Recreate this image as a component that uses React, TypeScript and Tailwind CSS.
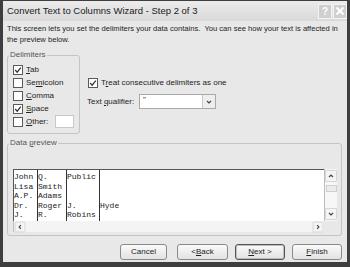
import React from 'react';

const rows = [
  ['John', 'Q.', 'Public', ''],
  ['Lisa', 'Smith', '', ''],
  ['A.P.', 'Adams', '', ''],
  ['Dr.', 'Roger', 'J.', 'Hyde'],
  ['J.', 'R.', 'Robins', ''],
];

const cols = ['w-[24px] border-r', 'w-[29px] border-r', 'w-[33px] border-r', 'flex-1'];

function Check({ checked }: { checked?: boolean }) {
  return (
    <span className="w-[10px] h-[10px] border border-[#5a5a5a] bg-white flex items-center justify-center shrink-0">
      {checked && (
        <svg width="8" height="8" viewBox="0 0 8 8">
          <path d="M1.2 4 L3.2 6.2 L6.8 1.6" stroke="#333" strokeWidth="1.2" fill="none" />
        </svg>
      )}
    </span>
  );
}

function Btn({ w, children, def }: { w: string; children: React.ReactNode; def?: boolean }) {
  return (
    <div
      className={`${w} h-[16px] rounded-[3px] flex items-center justify-center bg-gradient-to-b from-[#fafafa] to-[#e2e2e2] border ${
        def ? 'border-[#555] shadow-[inset_0_0_0_1px_#bdbdbd]' : 'border-[#8a8a8a]'
      } text-[8px] text-[#222]`}
    >
      {children}
    </div>
  );
}

function Arrow({ dir }: { dir: 'up' | 'down' | 'left' | 'right' }) {
  const d = {
    up: 'M2 5 L4 3 L6 5',
    down: 'M2 3 L4 5 L6 3',
    left: 'M5 2 L3 4 L5 6',
    right: 'M3 2 L5 4 L3 6',
  }[dir];
  return (
    <div className="w-[12px] h-[12px] flex items-center justify-center bg-[#f4f4f4] border border-[#d6d6d6] rounded-[1px]">
      <svg width="8" height="8" viewBox="0 0 8 8">
        <path d={d} stroke="#444" strokeWidth="1.2" fill="none" />
      </svg>
    </div>
  );
}

export default function App() {
  return (
    <div
      className="w-[350px] h-[267px] bg-[#3e3e3e] pt-[1px] px-[3px] pb-[5px] flex flex-col"
      style={{ fontFamily: '"Liberation Sans", Arial, sans-serif' }}
    >
      {/* Title bar */}
      <div className="h-[20px] bg-gradient-to-b from-[#ececec] to-[#d9d9d9] flex items-center pl-[4px] pr-[0px]">
        <span className="text-[9.5px] text-[#1a1a1a] flex-1">
          Convert Text to Columns Wizard - Step 2 of 3
        </span>
        <div className="flex gap-[1px]">
          <div className="w-[14px] h-[15px] bg-[#cfcfcf] border border-[#f4f4f4] flex items-center justify-center text-[10px] text-white font-bold">
            ?
          </div>
          <div className="w-[14px] h-[15px] bg-[#cfcfcf] border border-[#f4f4f4] flex items-center justify-center">
            <svg width="10" height="10" viewBox="0 0 10 10">
              <path d="M1.5 1.5 L8.5 8.5 M8.5 1.5 L1.5 8.5" stroke="#fff" strokeWidth="2" />
            </svg>
          </div>
        </div>
      </div>

      {/* Body */}
      <div className="flex-1 bg-[#e8e8e8] px-[4px] pt-[2px] flex flex-col text-[#222]">
        <p className="text-[7.6px] leading-[11px] whitespace-nowrap">
          This screen lets you set the delimiters your data contains.&nbsp; You can see how your text is affected in
          <br />
          the preview below.
        </p>

        <div className="flex mt-[5px]">
          <fieldset className="w-[73px] border border-[#c4c4c4] rounded-[3px] pl-[5px] pr-[2px] pt-[3px] pb-[5px]">
            <legend className="text-[8px] leading-[10px] text-[#555] px-[1px] -ml-[4px]">Delimiters</legend>
            <div className="flex flex-col text-[8px]">
              <label className="h-[13px] flex items-center gap-[3px]">
                <Check checked />
                <span><u>T</u>ab</span>
              </label>
              <label className="h-[13px] flex items-center gap-[3px]">
                <Check />
                <span>Se<u>m</u>icolon</span>
              </label>
              <label className="h-[13px] flex items-center gap-[3px]">
                <Check />
                <span><u>C</u>omma</span>
              </label>
              <label className="h-[13px] flex items-center gap-[3px]">
                <Check checked />
                <span><u>S</u>pace</span>
              </label>
              <label className="h-[13px] flex items-center gap-[3px]">
                <Check />
                <span className="flex-1"><u>O</u>ther:</span>
                <span className="w-[19px] h-[13px] bg-white border border-[#c8c8c8] mr-[3px]" />
              </label>
            </div>
          </fieldset>

          <div className="flex flex-col ml-[7px] pt-[26px] text-[8px]">
            <label className="h-[13px] flex items-center gap-[3px] ml-[1px]">
              <Check checked />
              <span>T<u>r</u>eat consecutive delimiters as one</span>
            </label>
            <div className="flex items-center mt-[5px]">
              <span className="w-[52px]">Text <u>q</u>ualifier:</span>
              <div className="w-[77px] h-[15px] bg-white border border-[#a8a8a8] flex items-center">
                <span className="flex-1 pl-[3px] text-[8px] leading-[8px] -mt-[3px]">"</span>
                <div className="w-[13px] h-[13px] bg-[#eeeeee] border-l border-[#c8c8c8] flex items-center justify-center">
                  <svg width="8" height="8" viewBox="0 0 8 8">
                    <path d="M2 3 L4 5 L6 3" stroke="#444" strokeWidth="1.2" fill="none" />
                  </svg>
                </div>
              </div>
            </div>
          </div>
        </div>

        <fieldset className="mt-[4px] w-[335px] border border-[#c4c4c4] rounded-[3px] pl-[5px] pr-[4px] pt-[21px] pb-[3px]">
          <legend className="text-[8px] leading-[10px] text-[#555] px-[1px] -ml-[4px]">
            Data <u>p</u>review
          </legend>
          <div className="flex flex-col">
            <div className="flex h-[52px]">
              <div className="flex-1 flex bg-white border-l border-t border-[#555] overflow-hidden">
                {cols.map((c, ci) => (
                  <div key={ci} className={`${c} border-[#333] flex flex-col pt-[2px]`}>
                    {rows.map((r, ri) => (
                      <div
                        key={ri}
                        className="h-[9.5px] leading-[9.5px] text-[8px] text-[#222] whitespace-pre"
                        style={{ fontFamily: '"Liberation Mono", "Courier New", monospace' }}
                      >
                        {r[ci] || ' '}
                      </div>
                    ))}
                  </div>
                ))}
              </div>
              <div className="w-[13px] bg-[#f7f7f7] flex flex-col items-center justify-between py-[1px] border-l border-[#bdbdbd]">
                <div className="flex flex-col items-center gap-[3px]">
                  <Arrow dir="up" />
                  <div className="w-[11px] h-[7px] bg-[#ececec] border border-[#d0d0d0]" />
                </div>
                <Arrow dir="down" />
              </div>
            </div>
            <div className="flex h-[11px]">
              <div className="flex-1 bg-[#f4f4f4] flex justify-between items-center border-l border-[#c0c0c0]">
                <div className="scale-90"><Arrow dir="left" /></div>
                <div className="scale-90"><Arrow dir="right" /></div>
              </div>
              <div className="w-[13px]" />
            </div>
          </div>
        </fieldset>

        <div className="flex justify-end mt-[8px] pr-[1px]">
          <Btn w="w-[47px]">Cancel</Btn>
          <div className="w-[10px]" />
          <Btn w="w-[51px]">&lt; <u>B</u>ack</Btn>
          <div className="w-[7px]" />
          <Btn w="w-[50px]" def><u>N</u>ext &gt;</Btn>
          <div className="w-[7px]" />
          <Btn w="w-[50px]"><u>F</u>inish</Btn>
        </div>
      </div>
    </div>
  );
}
